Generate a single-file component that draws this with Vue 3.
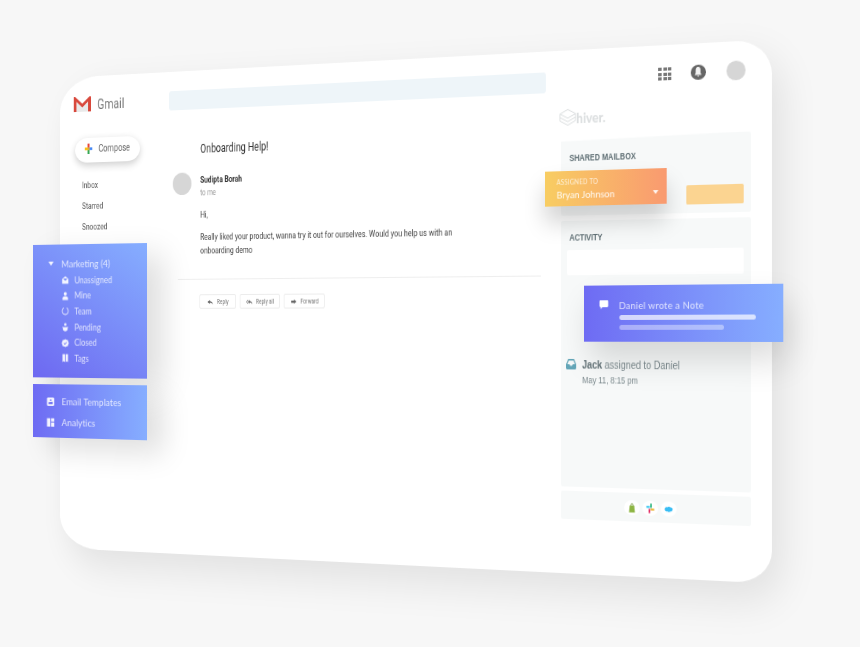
<template>
  <div class="stage">
    <!-- app window, flat layout then projected -->
    <div class="window" :style="{ transform: views.window }">
      <aside class="sidebar">
        <div class="brand">
          <svg class="gmail-logo" viewBox="0 0 25 16">
            <path d="M4 4 12.500 11 21 4V16H4Z" fill="#e9e9e9" />
            <path d="M0 1C0 .4.4 0 1 0H2L12.500 7.500 23 0H24C24.600 0 25 .4 25 1V16H21V5.200L12.500 11.500 4 5.200V16H0Z" fill="#d8483c" />
          </svg>
          <span class="gmail-name">Gmail</span>
        </div>
        <button class="compose">
          <svg class="plus" viewBox="0 0 12 12">
            <rect x="4.500" y="0" width="3" height="4.500" fill="#ea4335" />
            <rect x="7.500" y="4.500" width="4.500" height="3" fill="#4285f4" />
            <rect x="4.500" y="7.500" width="3" height="4.500" fill="#34a853" />
            <rect x="0" y="4.500" width="4.500" height="3" fill="#fbbc05" />
            <rect x="4.500" y="4.500" width="3" height="3" fill="#d8a52c" />
          </svg>
          Compose
        </button>
        <nav class="folders">
          <div v-for="f in folders" :key="f" class="folder">{{ f }}</div>
        </nav>
      </aside>

      <main class="mail">
        <div class="search"></div>
        <h1 class="subject">Onboarding Help!</h1>
        <div class="sender">
          <div class="sender-avatar"></div>
          <div>
            <div class="sender-name">Sudipta Borah</div>
            <div class="sender-to">to me</div>
          </div>
        </div>
        <div class="body-text">
          <p class="hi">Hi,</p>
          <p>Really liked your product, wanna try it out for ourselves. Would you help us with an<br />onboarding demo</p>
        </div>
        <div class="divider"></div>
        <div class="actions">
          <button v-for="a in actions" :key="a.label" class="action" :style="{ width: a.width + 'px' }">
            <svg class="action-icon" viewBox="0 0 12 8"><path :d="a.icon" /></svg>
            {{ a.label }}
          </button>
        </div>
      </main>

      <section class="hiver">
        <div class="topbar">
          <div class="apps">
            <i v-for="n in 9" :key="n"></i>
          </div>
          <div class="bell">
            <svg viewBox="0 0 10 10"><path d="M5 1.500C3.500 1.500 3 2.700 3 3.900V5.500L2.200 7H7.800L7 5.500V3.900C7 2.700 6.500 1.500 5 1.500ZM4.200 7.400H5.800L5 8.400Z" /></svg>
          </div>
          <div class="user"></div>
        </div>
        <div class="hiver-logo">
          <svg viewBox="0 0 24 20">
            <path d="M12 1 23 6 12 11 1 6ZM1 10 12 15 23 10M1 6V14L12 19 23 14V6" />
          </svg>
          <span>hiver.</span>
        </div>
        <div class="panel mailbox">
          <div class="panel-title">SHARED MAILBOX</div>
          <div class="status-block"></div>
        </div>
        <div class="panel activity">
          <div class="panel-title">ACTIVITY</div>
          <div class="activity-input"></div>
          <div class="log-row">
            <svg class="log-icon" viewBox="0 0 12 10">
              <path d="M2.500 0H9.500L12 5V8.500C12 9.400 11.400 10 10.500 10H1.500C.6 10 0 9.400 0 8.500V5ZM1.500 5H4L5 6.400H7L8 5H10.500L8.800 1.400H3.200Z" fill-rule="evenodd" />
            </svg>
            <span><b>Jack</b> assigned to Daniel</span>
          </div>
          <div class="log-date">May 11, 8:15 pm</div>
        </div>
        <div class="panel apps-footer">
          <span class="app-dot">
            <svg viewBox="0 0 10 10"><path d="M2.400 3H7.600L8.400 9.400H1.600Z" fill="#8db543" /><path d="M3.800 3V2.200C3.800 1 6.200 1 6.200 2.200V3" fill="none" stroke="#6d9233" stroke-width=".8" /></svg>
          </span>
          <span class="app-dot">
            <svg viewBox="0 0 10 10">
              <rect x=".5" y="2.800" width="4" height="1.800" fill="#36c5f0" />
              <rect x="5" y=".5" width="1.800" height="4" fill="#2eb67d" />
              <rect x="5.500" y="5.200" width="4" height="1.800" fill="#ecb22e" />
              <rect x="3.200" y="5.500" width="1.800" height="4" fill="#e01e5a" />
            </svg>
          </span>
          <span class="app-dot">
            <svg viewBox="0 0 10 10"><path d="M.5 5.200C.5 3.600 2.400 2.800 3.600 3.500 4.400 2.400 6.200 2.500 6.900 3.600 8.400 3.200 9.800 4.200 9.500 5.600 9.300 7 7.800 7.500 6.800 7.200 6 8 4.400 8 3.800 7.200 2.400 7.700.5 6.800.5 5.200Z" fill="#38bdf4" /></svg>
          </span>
        </div>
      </section>
    </div>

    <!-- floating cards -->
    <div class="card card-blue marketing" :style="{ transform: views.marketing }">
      <div class="group-head"><span class="caret"></span>Marketing (4)</div>
      <div v-for="it in labels" :key="it.name" class="label-row">
        <svg viewBox="0 0 10 10"><path :d="it.icon" fill-rule="evenodd" /></svg>
        {{ it.name }}
      </div>
    </div>

    <div class="card card-blue-flat templates" :style="{ transform: views.templates }">
      <div class="tool-row">
        <svg viewBox="0 0 10 10"><path fill-rule="evenodd" d="M2 .5H8C8.900.5 9.500 1.100 9.500 2V8C9.500 8.900 8.900 9.500 8 9.500H2C1.100 9.500.5 8.900.5 8V2C.5 1.100 1.100.5 2 .5ZM4 4H6V2.500H4ZM2.500 5.500V7.500H7.500V5Z" /></svg>
        Email Templates
      </div>
      <div class="tool-row">
        <svg viewBox="0 0 10 10"><path d="M.5.5H4.500V9.500H.5ZM5.500.5H9.500V4H5.500ZM5.500 5H9.500V9.500H5.500Z" /></svg>
        Analytics
      </div>
    </div>

    <div class="card assigned" :style="{ transform: views.assigned }">
      <div class="assigned-label">ASSIGNED TO</div>
      <div class="assigned-name">Bryan Johnson<span class="caret small"></span></div>
    </div>

    <div class="card card-blue-flat note" :style="{ transform: views.note }">
      <svg class="note-icon" viewBox="0 0 12 11"><path d="M1.500 0H10.500C11.400 0 12 .6 12 1.500V7C12 7.900 11.400 8.500 10.500 8.500H4L1.500 11V8.500C.6 8.500 0 7.900 0 7V1.500C0 .6.6 0 1.500 0Z" /></svg>
      <div class="note-body">
        <div class="note-title">Daniel wrote a Note</div>
        <div class="bar bar-long"></div>
        <div class="bar bar-short"></div>
      </div>
    </div>
  </div>
</template>

<script setup>
// matrix3d that maps a w x h box onto four screen corners (TL, TR, BR, BL)
const quad = (w, h, [[x0, y0], [x1, y1], [x2, y2], [x3, y3]]) => {
  const sx = x0 - x1 + x2 - x3
  const sy = y0 - y1 + y2 - y3
  const dx1 = x1 - x2
  const dx2 = x3 - x2
  const dy1 = y1 - y2
  const dy2 = y3 - y2
  const det = dx1 * dy2 - dx2 * dy1
  const g = (sx * dy2 - dx2 * sy) / det
  const k = (dx1 * sy - sx * dy1) / det
  const a = x1 - x0 + g * x1
  const b = x3 - x0 + k * x3
  const d = y1 - y0 + g * y1
  const e = y3 - y0 + k * y3
  return `matrix3d(${a / w},${d / w},0,${g / w},${b / h},${e / h},0,${k / h},0,0,1,0,${x0},${y0},0,1)`
}

const views = {
  window: quad(900, 500, [[60, 78], [772, 39.3], [772, 583.6], [60, 548]]),
  marketing: quad(130, 133, [[33, 245], [147, 243], [147, 378.7], [33, 377.3]]),
  templates: quad(130, 54, [[33, 384], [147, 385.3], [147, 440.3], [33, 437]]),
  assigned: quad(134, 36, [[545, 171.7], [666.7, 168], [666.7, 203.7], [545, 206.7]]),
  note: quad(218, 57, [[584, 285.7], [783.3, 283.7], [783.3, 342], [584, 341.7]])
}

const folders = ['Inbox', 'Starred', 'Snoozed']

const actions = [
  { label: 'Reply', width: 50, icon: 'M5 1 1 4 5 7V5C7.500 5 9 5.500 10.500 7.500 10 4.500 8 3 5 3Z' },
  { label: 'Reply all', width: 54, icon: 'M3.500 1 .5 4 3.500 7V6L1.800 4 3.500 2ZM6.500 1 3.500 4 6.500 7V5C8.500 5 10 5.500 11.500 7.500 11 4.500 9 3 6.500 3Z' },
  { label: 'Forward', width: 54, icon: 'M7 1 11 4 7 7V5.500H2V2.500H7Z' }
]

const labels = [
  { name: 'Unassigned', icon: 'M1 3.800 5 .8 9 3.800V9.200H1ZM2.800 4.200 5 5.800 7.200 4.200V3.400H2.800Z' },
  { name: 'Mine', icon: 'M5 .6A2 2 0 1 1 5 4.600 2 2 0 0 1 5 .6ZM1.500 9.400V7.200C1.500 5.800 3.300 5.200 5 5.200S8.500 5.800 8.500 7.200V9.400Z' },
  { name: 'Team', icon: 'M3 1.200A4.300 4.300 0 1 0 7 1.200L6.600 2A3.400 3.400 0 1 1 3.400 2Z' },
  { name: 'Pending', icon: 'M5 .6A1.500 1.500 0 1 1 5 3.600 1.500 1.500 0 0 1 5 .6ZM1 4.600 3 5H7L9 4.600 8 6.200V7.600C8 8.800 6.500 9.600 5 9.600S2 8.800 2 7.600V6.200Z' },
  { name: 'Closed', icon: 'M5 .5 6.500 1.400 8.300 1.600 8.800 3.300 9.600 5 8.800 6.700 8.300 8.400 6.500 8.600 5 9.500 3.500 8.600 1.700 8.400 1.200 6.700.4 5 1.200 3.300 1.700 1.600 3.500 1.400ZM4.400 7 7.200 4.200 6.500 3.500 4.400 5.600 3.500 4.700 2.800 5.400Z' },
  { name: 'Tags', icon: 'M1.500.6H4.600V9.400L3 8.200 1.500 9.400ZM5.500.6H8.500V9.400L7 8.200 5.500 9.400Z' }
]
</script>

<style scoped>
.stage { position: relative; width: 860px; height: 647px; overflow: hidden; background: #f7f7f7; font-family: Roboto, sans-serif; }

.window { width: 900px; height: 500px; display: grid; grid-template-columns: 156px 486px 240px; transform-origin: 0 0; background: #fff; border-radius: 56px 40px 40px 56px / 38px 32px 30px 36px; box-shadow: 12px 16px 40px rgba(0, 0, 0, 0.09); filter: blur(0.3px); }

.sidebar { padding: 21px 0 0 20px; }
.brand { display: flex; align-items: center; gap: 9px; height: 16px; }
.gmail-logo { width: 25px; height: 16px; }
.gmail-name { margin-top: 1px; font-size: 15px; color: #777; line-height: 16px; }
.compose { display: flex; align-items: center; gap: 8px; width: 93px; height: 26px; margin: 28px 0 0 2px; padding: 0 0 3px 13px; border: none; border-radius: 18px / 13px; background: #fff; font-family: Roboto, sans-serif; font-size: 10.5px; color: #666; box-shadow: 0 3px 8px rgba(0, 0, 0, 0.2); }
.plus { width: 13px; height: 11px; }
.folders { margin: 13px 0 0 12px; }
.folder { height: 22px; line-height: 22px; font-size: 9.5px; color: #555; }

.search { height: 20px; margin-top: 20px; border-radius: 3px; background: #eef5f9; }
.subject { margin: 33px 0 0 43px; font-size: 12px; line-height: 16px; font-weight: 400; color: #333; }
.sender { display: flex; gap: 12px; margin: 16px 0 0 5px; }
.sender-avatar { width: 26px; height: 23px; border-radius: 50%; background: #d6d6d6; }
.sender-name { margin-top: 2px; font-size: 9px; line-height: 12px; font-weight: 700; color: #333; }
.sender-to { margin-top: 1px; font-size: 8.5px; line-height: 12px; color: #999; }
.body-text { margin: 10px 0 0 43px; font-size: 9.1px; line-height: 14px; color: #444; }
.body-text p { margin: 0; }
.body-text .hi { margin-bottom: 9px; }
.divider { width: 468px; height: 1px; margin: 22px 0 0 12px; background: #eeeeee; }
.actions { display: flex; gap: 5px; margin: 15px 0 0 42px; }
.action { display: flex; align-items: center; justify-content: center; gap: 4px; height: 15px; padding: 0; border: 1px solid #ececec; border-radius: 2px; background: #fff; font-family: Roboto, sans-serif; font-size: 6.5px; color: #777; }
.action-icon { width: 10px; height: 6px; fill: #666; }

.hiver { box-sizing: border-box; width: 258px; padding: 0 23px 0 18px; }
.topbar { display: flex; align-items: center; justify-content: flex-end; height: 20px; margin-top: 17px; padding-right: 6.5px; }
.apps { display: grid; grid-template-columns: repeat(3, 1fr); gap: 1.5px; width: 15px; height: 12px; margin-right: 22px; }
.apps i { background: #777; }
.bell { width: 16.5px; height: 13.5px; margin-right: 23px; border-radius: 50%; background: #666; }
.bell svg { display: block; width: 100%; height: 100%; fill: #f2f2f2; }
.user { width: 21px; height: 17.6px; border-radius: 50%; background: #d6d6d6; }
.hiver-logo { display: flex; align-items: center; height: 18px; margin: 18px 0 10.5px -2px; font-family: Lato, sans-serif; font-size: 14px; font-weight: 900; color: #dcdfe0; }
.hiver-logo svg { width: 20px; height: 18px; fill: none; stroke: #dcdfe0; stroke-width: 1.2; }

.panel { background: #f7f9f9; border-radius: 2px; font-family: "Liberation Sans", sans-serif; }
.panel-title { height: 10px; line-height: 10px; font-size: 8.5px; font-weight: 700; color: #5f6f74; }
/* top edge of this panel leans more than the window perspective */
.mailbox { height: 74.5px; padding: 14px 8px 0 10px; box-sizing: border-box; clip-path: polygon(0 3.5px, 100% 0, 100% 100%, 0 100%); }
.status-block { width: 64.5px; height: 18px; margin: 24px 0 0 auto; border-radius: 1.5px; background: #fbd491; }
.activity { height: 254px; margin-top: 5px; padding: 11px 8px 0 7px; box-sizing: border-box; }
.activity .panel-title { padding-left: 3px; }
.activity-input { height: 24px; margin-top: 7px; border-radius: 2px; background: #fff; }
.log-row { display: flex; align-items: center; gap: 7px; height: 14px; margin: 78px 0 0 -1px; font-size: 10.5px; color: #7d8b8f; }
.log-row b { color: #5f6f74; }
.log-icon { width: 12px; height: 10px; fill: #63a6b8; }
.log-date { margin: 2.4px 0 0 18px; font-size: 8.8px; line-height: 12px; color: #7d8b8f; }
.apps-footer { display: flex; align-items: center; justify-content: center; gap: 3.5px; height: 27px; margin-top: 4px; padding-right: 9px; }
.app-dot { display: flex; align-items: center; justify-content: center; width: 17.5px; height: 14px; border-radius: 50%; background: #fff; }
.app-dot svg { width: 12px; height: 10px; }

.card { position: absolute; left: 0; top: 0; transform-origin: 0 0; box-sizing: border-box; font-family: Lato, sans-serif; color: rgba(255, 255, 255, 0.78); filter: blur(0.3px); }
.card-blue { background: linear-gradient(35deg, #6d68f1, #86aeff); }
.card-blue-flat { background: linear-gradient(90deg, #6e6bf3, #86aeff); }

.marketing { width: 130px; height: 133px; padding-top: 12px; box-shadow: 18px 12px 30px rgba(0, 0, 0, 0.13); }
.group-head { display: flex; align-items: center; height: 14px; padding-left: 18px; font-size: 9.5px; }
.caret { width: 0; height: 0; margin-right: 9px; border-left: 3.5px solid transparent; border-right: 3.5px solid transparent; border-top: 4px solid rgba(255, 255, 255, 0.9); }
.label-row { display: flex; align-items: center; gap: 6px; height: 15.6px; padding-left: 33px; font-size: 8.5px; }
.group-head + .label-row { margin-top: 2px; }
.label-row svg { width: 9px; height: 9px; fill: rgba(255, 255, 255, 0.9); }

.templates { width: 130px; height: 54px; padding-top: 7px; box-shadow: 18px 12px 30px rgba(0, 0, 0, 0.13); }
.tool-row { display: flex; align-items: center; gap: 8px; height: 21px; padding-left: 16px; font-size: 9.5px; letter-spacing: 0.1px; }
.tool-row svg { width: 9.5px; height: 9.5px; fill: rgba(255, 255, 255, 0.92); }

.assigned { width: 134px; height: 36px; padding: 6.5px 9px 0 13px; background: linear-gradient(90deg, #f8cd62, #f99a70); box-shadow: 0 16px 24px rgba(0, 0, 0, 0.18); }
.assigned-label { font-size: 6.8px; line-height: 9px; letter-spacing: 0.2px; color: rgba(255, 255, 255, 0.75); }
.assigned-name { display: flex; align-items: center; justify-content: space-between; margin-top: 2px; font-size: 10px; line-height: 13px; color: rgba(255, 255, 255, 0.92); }
.caret.small { margin: 0; }

.note { display: flex; width: 218px; height: 57px; padding: 14px 0 0 16.5px; box-shadow: 6px 18px 34px rgba(0, 0, 0, 0.14); }
.note-icon { width: 11px; height: 9px; margin-top: 1px; fill: #fff; }
.note-body { margin-left: 12px; }
.note-title { font-size: 10px; line-height: 12px; letter-spacing: 0.3px; }
.bar { height: 5px; border-radius: 3px; }
.bar-long { width: 149px; margin-top: 4px; background: rgba(255, 255, 255, 0.7); }
.bar-short { width: 115px; margin-top: 5px; background: rgba(255, 255, 255, 0.4); }
</style>
